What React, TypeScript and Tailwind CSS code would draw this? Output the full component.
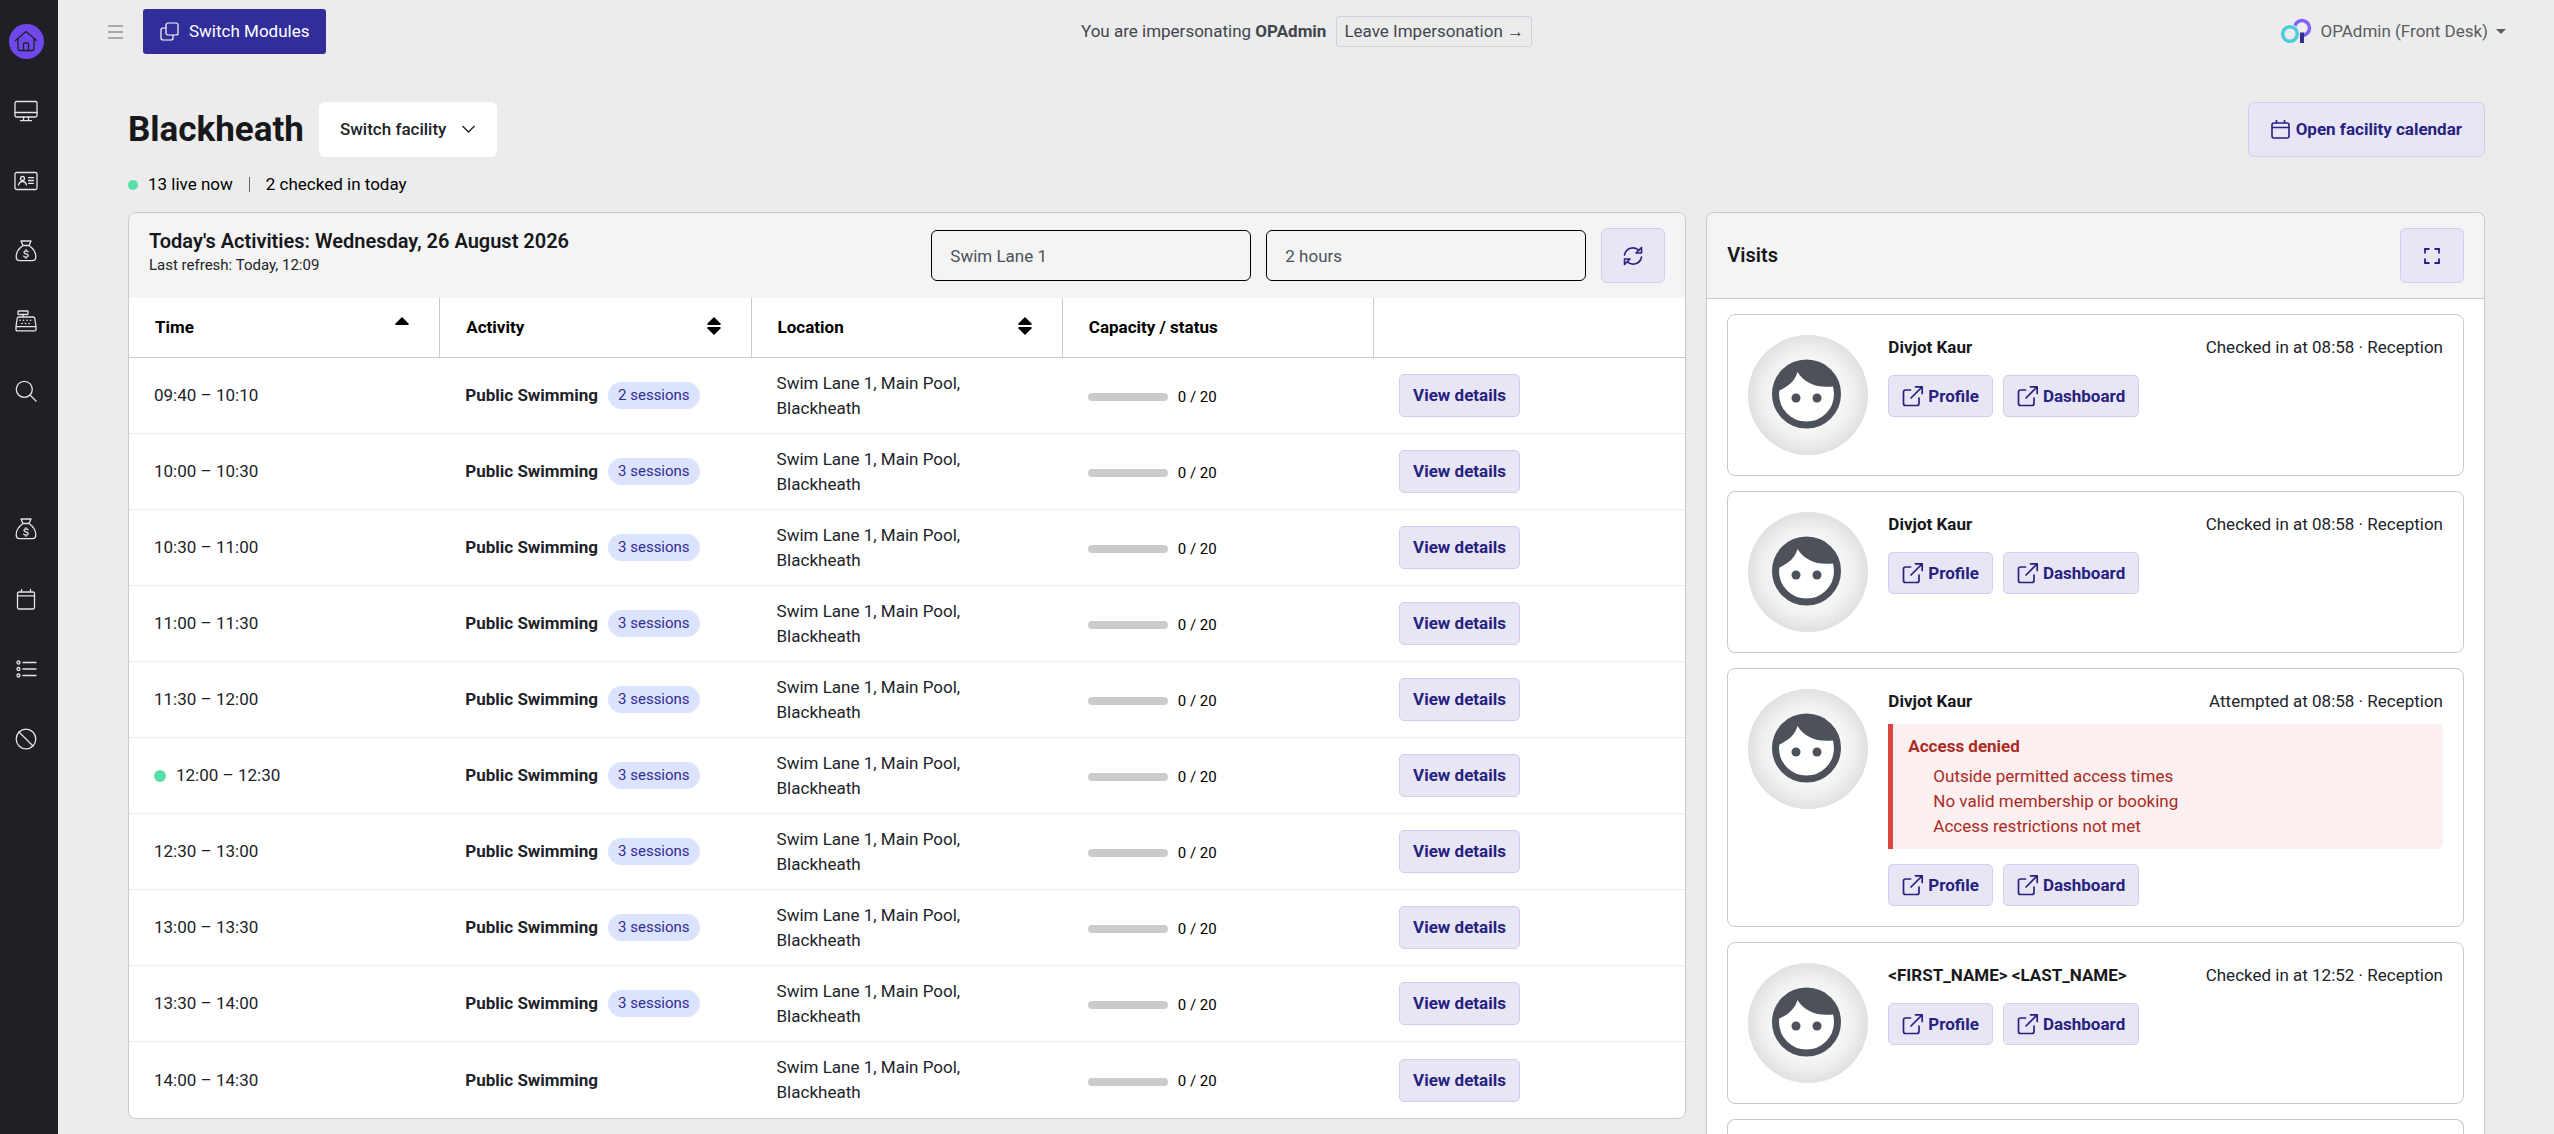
import type { ReactNode } from "react";

const times = [
  "09:40 – 10:10",
  "10:00 – 10:30",
  "10:30 – 11:00",
  "11:00 – 11:30",
  "11:30 – 12:00",
  "12:00 – 12:30",
  "12:30 – 13:00",
  "13:00 – 13:30",
  "13:30 – 14:00",
  "14:00 – 14:30",
];

const activities = times.map((time, i) => ({
  time,
  live: i === 5,
  sessions: i === 0 ? 2 : i === 9 ? 0 : 3,
}));

const visits = [
  { name: "Divjot Kaur", status: "Checked in at 08:58 · Reception", denied: [] },
  { name: "Divjot Kaur", status: "Checked in at 08:58 · Reception", denied: [] },
  {
    name: "Divjot Kaur",
    status: "Attempted at 08:58 · Reception",
    denied: ["Outside permitted access times", "No valid membership or booking", "Access restrictions not met"],
  },
  { name: "<FIRST_NAME> <LAST_NAME>", status: "Checked in at 12:52 · Reception", denied: [] },
];

const lilac = "border border-[#d2cdee] bg-[#e8e6f5] text-[#27227f]";

function NavIcon({ children }: { children: ReactNode }) {
  return (
    <svg width="24" height="24" viewBox="0 0 24 24" fill="none" stroke="currentColor" strokeWidth="1.3" strokeLinecap="round" strokeLinejoin="round" aria-hidden="true">
      {children}
    </svg>
  );
}

function HomeIcon() {
  return (
    <NavIcon>
      <path d="M1.500 11.500 L12 2.500 L22.500 11.500" />
      <path d="M4 9.500V19.500q0 2 2 2h12q2 0 2-2V9.500" />
      <path d="M9.500 21.500v-6.500q0-1 1-1h3q1 0 1 1v6.500" />
    </NavIcon>
  );
}

function DisplayIcon() {
  return (
    <NavIcon>
      <rect x="1" y="2.500" width="22" height="15.500" rx="1.500" />
      <path d="M1 13.500h22M9.500 18v3.500M14.500 18v3.500M6.500 21.700h11" />
    </NavIcon>
  );
}

function IdCardIcon() {
  return (
    <NavIcon>
      <rect x="1" y="3.500" width="22" height="17" rx="1.500" />
      <circle cx="8.500" cy="9.500" r="2" />
      <path d="M4.500 16q1-3.500 4-3.500t4 3.500M14.500 8.700h5M14.500 11.500h5M14.500 14.300h5" />
    </NavIcon>
  );
}

function MoneyBagIcon() {
  return (
    <NavIcon>
      <path d="M7 2h10l-2 4.500H9zM9 6.500C5.500 9 2.200 13 2.200 17.500c0 3 1 4.200 3.500 4.200h12.600c2.500 0 3.500-1.200 3.500-4.200 0-4.500-3.300-8.500-6.800-11" />
      <path d="M14.200 12.800q-.8-1-2.200-1-2 0-2 1.500 0 1.300 2 1.600t2.200 1.700q0 1.500-2.200 1.500-1.500 0-2.300-1M12 10.700v1.100M12 18.100v1.200" />
    </NavIcon>
  );
}

function RegisterIcon() {
  return (
    <NavIcon>
      <rect x="4" y="2" width="10" height="3.500" rx="0.500" />
      <path d="M9 5.500v2.500M5 8h14q1.500 0 1.800 1.500L22 17.500v3q0 1.300-1.300 1.300H3.300q-1.300 0-1.300-1.300v-3L3.200 9.500Q3.500 8 5 8zM2 17.700h20" />
      <path strokeDasharray="0.1 3.400" strokeWidth="1.600" d="M6 11.300h14M8 14.500h10" />
    </NavIcon>
  );
}

function SearchIcon() {
  return (
    <NavIcon>
      <circle cx="10.300" cy="10.300" r="8" />
      <path d="M16 16l6 6" />
    </NavIcon>
  );
}

function CalendarIcon() {
  return (
    <NavIcon>
      <rect x="3.500" y="5" width="17" height="17" rx="1.500" />
      <path d="M3.500 8.800h17M7.500 2.500V5M16.500 2.500V5" />
    </NavIcon>
  );
}

function ListIcon() {
  return (
    <NavIcon>
      <circle cx="4.500" cy="5.500" r="1.500" />
      <circle cx="4.500" cy="12" r="1.500" />
      <circle cx="4.500" cy="18.500" r="1.500" />
      <path d="M9 5.500h13M9 12h13M9 18.500h13" />
    </NavIcon>
  );
}

function BanIcon() {
  return (
    <NavIcon>
      <circle cx="12" cy="12" r="9.800" />
      <path d="M5 5l14 14" />
    </NavIcon>
  );
}

function ExternalIcon() {
  return (
    <svg width="22" height="22" viewBox="0 0 22 22" fill="none" stroke="currentColor" strokeWidth="1.700" strokeLinecap="round" strokeLinejoin="round" aria-hidden="true">
      <path d="M8.500 5H3.500Q1.500 5 1.500 7v11.500q0 2 2 2h11.500q2 0 2-2V13" />
      <path d="M13.500 1.800h6.700v6.700M20 2L9 13" />
    </svg>
  );
}

function Avatar() {
  return (
    <svg className="shrink-0" width="120" height="120" viewBox="0 0 120 120" role="img" aria-label="No photo">
      <defs>
        <radialGradient id="avatar-shade">
          <stop offset="0.3" stopColor="#ffffff" />
          <stop offset="0.75" stopColor="#f0f0f0" />
          <stop offset="1" stopColor="#e0e0e0" />
        </radialGradient>
      </defs>
      <circle cx="60" cy="60" r="60" fill="url(#avatar-shade)" />
      <circle cx="58.500" cy="59" r="31" fill="#fff" stroke="#4d515a" strokeWidth="7" />
      <path d="M30 56C40 52 47 46 49.500 37C57 49 71 54 87 51L88 42L76 29L58 25L40 30L29 43z" fill="#4d515a" />
      <circle cx="48" cy="63" r="4.500" fill="#4d515a" />
      <circle cx="69" cy="63" r="4.500" fill="#4d515a" />
    </svg>
  );
}

function SortIcon({ both }: { both?: boolean }) {
  return (
    <svg className="mr-1 mb-[3px]" width="14" height="20" viewBox="0 0 14 20" aria-hidden="true">
      <path d="M7 1L13.500 7.500V9H.5V7.500z" />
      {both && <path d="M7 19L13.500 12.500V11H.5V12.500z" />}
    </svg>
  );
}

function Sidebar() {
  const link = "flex h-[70px] w-[52px] items-center justify-center text-[#e4e4e6]";
  return (
    <nav className="w-[58px] shrink-0 bg-[#1f2025] pt-1.5" aria-label="Modules">
      <a href="#home" aria-label="Home" className={link}>
        <span className="flex size-[35px] items-center justify-center rounded-full bg-[#6f47ea] text-[#1f2025]">
          <HomeIcon />
        </span>
      </a>
      <a href="#display" aria-label="Display" className={link}><DisplayIcon /></a>
      <a href="#members" aria-label="Members" className={link}><IdCardIcon /></a>
      <a href="#sales" aria-label="Sales" className={link}><MoneyBagIcon /></a>
      <a href="#till" aria-label="Till" className={link}><RegisterIcon /></a>
      <a href="#search" aria-label="Search" className={`${link} mb-[68px]`}><SearchIcon /></a>
      <a href="#payments" aria-label="Payments" className={link}><MoneyBagIcon /></a>
      <a href="#calendar" aria-label="Calendar" className={link}><CalendarIcon /></a>
      <a href="#lists" aria-label="Lists" className={link}><ListIcon /></a>
      <a href="#blocked" aria-label="Blocked" className={link}><BanIcon /></a>
    </nav>
  );
}

function TopBar() {
  return (
    <header className="grid grid-cols-[1fr_auto_1fr] items-center pt-[9px] pr-12 pl-[49px] text-[#41464c]">
      <div className="flex items-center gap-[19px]">
        <button type="button" aria-label="Toggle menu">
          <svg width="17" height="14" viewBox="0 0 17 14" stroke="#666" strokeWidth="1.200" aria-hidden="true">
            <path d="M1 1h15M1 7h15M1 13h15" />
          </svg>
        </button>
        <button type="button" className="flex h-[45px] items-center gap-2.5 rounded-[3px] bg-[#312d9b] px-[17px] text-white">
          <svg width="19" height="19" viewBox="0 0 19 19" fill="none" stroke="currentColor" strokeWidth="1.200" aria-hidden="true">
            <rect x="6" y="1" width="12" height="12" rx="2" />
            <path d="M6 6H3Q1 6 1 8v8q0 2 2 2h8q2 0 2-2v-3" />
          </svg>
          Switch Modules
        </button>
      </div>
      <div className="flex items-center gap-2.5">
        <span>You are impersonating <b>OPAdmin</b></span>
        <button type="button" className="h-[31px] rounded-[3px] border border-[#c8d3df] px-[7px]">
          Leave Impersonation <span className="font-['Liberation_Sans',sans-serif]">→</span>
        </button>
      </div>
      <button type="button" className="flex items-center gap-2 justify-self-end text-[#5a5c5f]">
        <svg width="32" height="27" viewBox="0 0 32 27" fill="none" aria-hidden="true">
          <circle cx="22" cy="10" r="7.500" stroke="#8262f6" strokeWidth="3.500" />
          <path d="M15 15l9 0v12H15z" fill="#ececec" />
          <circle cx="10" cy="16" r="9.800" fill="#ececec" />
          <circle cx="10" cy="16" r="7.300" stroke="#4ecbd9" strokeWidth="3.500" />
          <path d="M20 14.500h4V25h-4z" fill="#322c96" />
        </svg>
        OPAdmin (Front Desk)
        <svg width="10" height="5" viewBox="0 0 10 5" fill="currentColor" aria-hidden="true"><path d="M0 0h10L5 5z" /></svg>
      </button>
    </header>
  );
}

function ActivityTable() {
  const th = "border-r border-[#c9cacc] px-[26px] text-left font-bold text-black last:border-r-0";
  const filter = "h-[51px] w-[320px] rounded-md border border-black bg-transparent px-[18px] text-[#4d515a]";
  return (
    <section className="min-w-0 flex-[1559] self-start overflow-hidden rounded-lg border border-[#c9cacc] bg-white">
      <div className="flex h-[85px] items-center justify-between bg-[#f4f4f4] px-5">
        <div className="-mt-2">
          <h2 className="text-[20px] leading-[26px] font-semibold text-[#17181b]">Today's Activities: Wednesday, 26 August 2026</h2>
          <p className="text-[15px] leading-[22px]">Last refresh: Today, 12:09</p>
        </div>
        <div className="flex items-center gap-[15px]">
          <input aria-label="Location" className={filter} defaultValue="Swim Lane 1" />
          <input aria-label="Time range" className={filter} defaultValue="2 hours" />
          <button type="button" aria-label="Refresh" className={`flex h-[55px] w-16 items-center justify-center rounded-md ${lilac}`}>
            <svg width="20" height="20" viewBox="0 0 20 20" fill="none" stroke="currentColor" strokeWidth="1.600" strokeLinecap="round" strokeLinejoin="round" aria-hidden="true">
              <path d="M1.500 9a8.500 8.500 0 0 1 14.500-4.500M18.500 1.500V7H13zM18.500 11a8.500 8.500 0 0 1-14.500 4.500M1.500 18.500V13H7z" />
            </svg>
          </button>
        </div>
      </div>
      <table className="w-full table-fixed border-separate border-spacing-0">
        <thead>
          <tr className="h-[60px] *:border-b">
            <th className={th}><span className="flex items-center justify-between">Time <SortIcon /></span></th>
            <th className={th}><span className="flex items-center justify-between">Activity <SortIcon both /></span></th>
            <th className={th}><span className="flex items-center justify-between">Location <SortIcon both /></span></th>
            <th className={th}>Capacity / status</th>
            <th className={th} aria-label="Actions" />
          </tr>
        </thead>
        <tbody>
          {activities.map((a) => (
            <tr key={a.time} className="h-[76px] *:border-b *:border-[#ebebec] *:px-[25px] last:*:border-b-0">
              <td>
                <span className="flex items-center gap-2.5">
                  {a.live && <span className="size-3 rounded-full bg-[#57dfaa]" />}
                  {a.time}
                </span>
              </td>
              <td>
                <span className="flex items-center gap-2.5">
                  <b>Public Swimming</b>
                  {a.sessions > 0 && (
                    <span className="rounded-full bg-[#dbe3fd] px-2.5 text-[15px] leading-[27px] text-[#322d93]">{a.sessions} sessions</span>
                  )}
                </span>
              </td>
              <td>Swim Lane 1, Main Pool,<br />Blackheath</td>
              <td>
                <span className="flex items-center gap-2.5 pt-[3px] text-[15px] text-black">
                  <span className="h-2 w-20 rounded-full bg-[#cacbcd]" />
                  0 / 20
                </span>
              </td>
              <td>
                <button type="button" className={`h-[43px] rounded-[5px] px-[13px] font-bold ${lilac}`}>View details</button>
              </td>
            </tr>
          ))}
        </tbody>
      </table>
    </section>
  );
}

function Visits() {
  const action = `flex h-[42px] items-center gap-1 rounded-[5px] px-[13px] font-bold ${lilac}`;
  return (
    <section className="min-w-0 flex-[778] overflow-hidden rounded-t-lg border border-b-0 border-[#c9cacc] bg-white">
      <div className="flex h-[86px] items-center justify-between border-b border-[#c9cacc] bg-[#f4f4f4] px-5">
        <h2 className="text-[20px] font-semibold text-[#17181b]">Visits</h2>
        <button type="button" aria-label="Full screen" className={`flex h-[55px] w-16 items-center justify-center rounded-md ${lilac}`}>
          <svg width="16" height="16" viewBox="0 0 16 16" fill="none" stroke="currentColor" strokeWidth="1.800" aria-hidden="true">
            <path d="M1 5.500V1h4.500M10.500 1H15v4.500M15 10.500V15h-4.500M5.500 15H1v-4.500" />
          </svg>
        </button>
      </div>
      <ul className="flex flex-col gap-[15px] px-5 pt-[15px]">
        {visits.map((v, i) => (
          <li key={i} className="flex gap-5 rounded-lg border border-[#c9cacc] p-5">
            <Avatar />
            <div className="flex-1">
              <div className="flex justify-between">
                <h3 className="font-bold text-[#17181b]">{v.name}</h3>
                <span>{v.status}</span>
              </div>
              {v.denied.length > 0 && (
                <div className="mt-2.5 rounded-r-md border-l-[5px] border-[#dc4741] bg-[#fcefef] px-[15px] py-2.5 text-[#a92b24]">
                  <b>Access denied</b>
                  <ul className="mt-[5px] pl-[25px]">
                    {v.denied.map((reason) => (
                      <li key={reason}>{reason}</li>
                    ))}
                  </ul>
                </div>
              )}
              <div className="mt-[15px] flex gap-2.5">
                <a href="#profile" className={action}><ExternalIcon />Profile</a>
                <a href="#dashboard" className={action}><ExternalIcon />Dashboard</a>
              </div>
            </div>
          </li>
        ))}
        {/* next visit, still loading */}
        <li className="h-[15px] rounded-t-lg border border-b-0 border-[#c9cacc]" />
      </ul>
    </section>
  );
}

export default function App() {
  return (
    <div className="flex min-h-screen bg-[#ececec] font-[Roboto,sans-serif] text-[17px] leading-[25px] text-[#212329]">
      <Sidebar />
      <div className="min-w-0 flex-1">
        <TopBar />
        <main className="pr-[69px] pl-[70px]">
          <div className="mt-12 flex items-center justify-between">
            <div className="flex items-center gap-[15px]">
              <h1 className="text-[35px] font-bold text-[#17181b]">Blackheath</h1>
              <button type="button" className="flex h-[55px] items-center gap-[15px] rounded-md bg-white px-[21px] font-medium">
                Switch facility
                <svg width="15" height="9" viewBox="0 0 15 9" fill="none" stroke="currentColor" strokeWidth="1.400" aria-hidden="true">
                  <path d="M1.500 1l6 6 6-6" />
                </svg>
              </button>
            </div>
            <button type="button" className={`flex h-[55px] items-center gap-1.5 rounded-md px-[22px] font-bold ${lilac}`}>
              <svg width="19" height="19" viewBox="0 0 19 19" fill="none" stroke="currentColor" strokeWidth="1.600" aria-hidden="true">
                <rect x="1" y="3" width="17" height="15" rx="2" />
                <path d="M1 7.500h17M5.500 0v3M13.500 0v3" />
              </svg>
              Open facility calendar
            </button>
          </div>
          <div className="mt-[15px] flex items-center text-black">
            <span className="mr-2.5 size-2.5 rounded-full bg-[#57dfaa]" />
            13 live now
            <span className="mx-4 h-[15px] w-px bg-[#666]" />
            2 checked in today
          </div>
          <div className="mt-[15px] flex gap-5">
            <ActivityTable />
            <Visits />
          </div>
        </main>
      </div>
    </div>
  );
}
